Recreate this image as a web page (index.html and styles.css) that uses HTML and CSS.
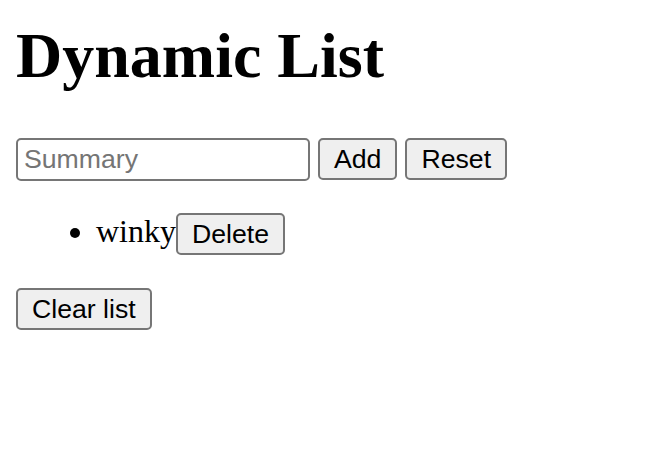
FILE: index.html
```html
<!DOCTYPE html>
<html>
<head>
<meta charset="utf-8">
<title>Dynamic List</title>
<link rel="stylesheet" href="styles.css">
</head>
<body>
<h1 class="title">Dynamic List</h1>
<form class="entry">
<input class="field" type="text" placeholder="Summary"> <button class="btn" type="button">Add</button> <button class="btn" type="reset">Reset</button>
</form>
<ul class="items">
<li class="item">winky<button class="btn" type="button">Delete</button></li>
</ul>
<button class="btn" type="button">Clear list</button>
</body>
</html>
```
FILE: styles.css
```css
html { background: #fff; }
body {
  margin: 16px;
  font-family: "Liberation Serif", "Times New Roman", serif;
  font-size: 32px;
  color: #000;
}
.title {
  font-size: 64px;
  font-weight: bold;
  margin: 3px 0 45px 0;
  line-height: 1.15;
}
.entry { margin: 0; }
.field, .btn {
  font-family: "Liberation Sans", Arial, sans-serif;
  font-size: 26.67px;
  color: #000;
  border: 2px solid #767676;
  border-radius: 5px;
  vertical-align: middle;
  box-sizing: border-box;
}
.field {
  width: 294px;
  height: 43px;
  padding: 2px 6px;
  background: #fff;
}
.field::placeholder { color: #757575; }
.btn {
  background: #efefef;
  padding: 2px 14px;
  height: 42px;
}
.items {
  margin: 32px 0;
  padding-left: 80px;
}
```
